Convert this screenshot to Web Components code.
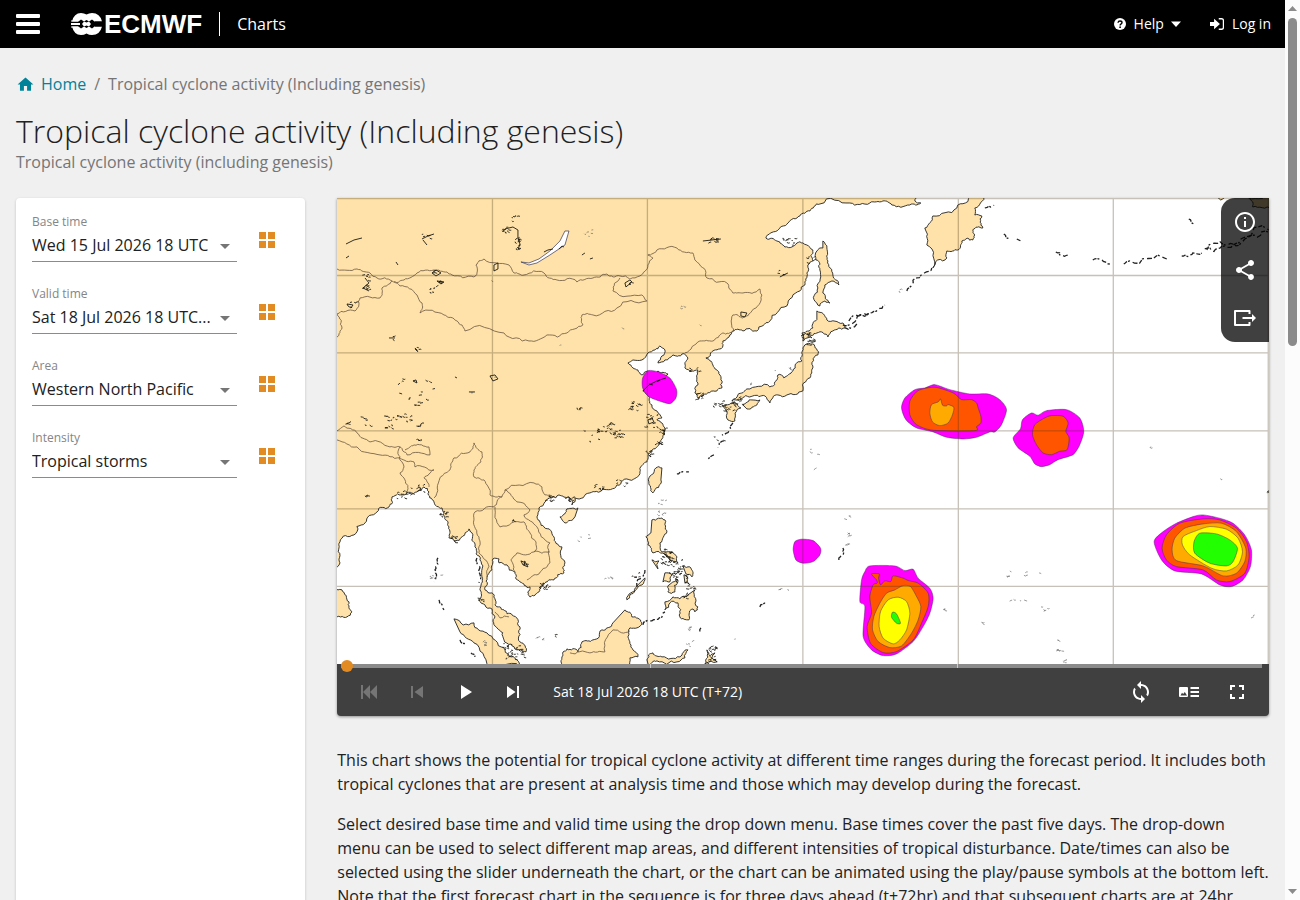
<!DOCTYPE html>
<html lang="en">
<head>
<meta charset="utf-8">
<title>Tropical cyclone activity (Including genesis) | ECMWF Charts</title>
<style>
    body {
        margin: 0;
        background-color: #f0f0f0;
        font-family: "Open Sans", "Noto Sans", sans-serif;
        font-size: 16px;
        line-height: 24px;
        color: #212121;
    }
</style>
</head>
<body>
<charts-app>
    <site-header slot="header" section="Charts"></site-header>
    <page-heading slot="heading" heading="Tropical cyclone activity (Including genesis)" subtitle="Tropical cyclone activity (including genesis)"></page-heading>
    <filter-panel slot="side">
        <filter-field label="Base time" value="Wed 15 Jul 2026 18 UTC"></filter-field>
        <filter-field label="Valid time" value="Sat 18 Jul 2026 18 UTC..."></filter-field>
        <filter-field label="Area" value="Western North Pacific"></filter-field>
        <filter-field label="Intensity" value="Tropical storms"></filter-field>
    </filter-panel>
    <chart-player caption="Sat 18 Jul 2026 18 UTC (T+72)">
        <cyclone-map></cyclone-map>
    </chart-player>
    <chart-text>
        <p>This chart shows the potential for tropical cyclone activity at different time ranges during the forecast period. It includes both tropical cyclones that are present at analysis time and those which may develop during the forecast.</p>
        <p>Select desired base time and valid time using the drop down menu. Base times cover the past five days. The drop-down menu can be used to select different map areas, and different intensities of tropical disturbance. Date/times can also be selected using the slider underneath the chart, or the chart can be animated using the play/pause symbols at the bottom left. Note that the first forecast chart in the sequence is for three days ahead (t+72hr) and that subsequent charts are at 24hr intervals.</p>
    </chart-text>
</charts-app>

<script>
const ICONS = {
    menu: '<path d="M1 2h22a1 1 0 0 1 1 1v2a1 1 0 0 1-1 1H1a1 1 0 0 1-1-1V3a1 1 0 0 1 1-1zM1 10h22a1 1 0 0 1 1 1v2a1 1 0 0 1-1 1H1a1 1 0 0 1-1-1v-2a1 1 0 0 1 1-1zM1 18h22a1 1 0 0 1 1 1v2a1 1 0 0 1-1 1H1a1 1 0 0 1-1-1v-2a1 1 0 0 1 1-1z"/>',
    home: '<path d="M10 20v-6h4v6h5v-8h3L12 3 2 12h3v8z"/>',
    help: '<circle cx="12" cy="12" r="12"/><path d="M8 9.500q.5-3.500 4-3.500 4 0 4 3.200 0 2-2.200 3.200-1.500.8-1.500 2.600" fill="none" stroke="#000" stroke-width="2.800"/><circle cx="12.200" cy="18.300" r="1.800" fill="#000"/>',
    login: '<path d="M0 8.500h7V3l10 9-10 9v-5.500H0z"/><path d="M15 3h5q3 0 3 3v12q0 3-3 3h-5" fill="none" stroke="currentColor" stroke-width="2.200"/>',
    caret: '<path d="M2 7h20L12 18z"/>',
    drop: '<path d="M7 10l5 5 5-5z"/>',
    grid: '<path d="M4 4h7v7H4zM13 4h7v7h-7zM4 13h7v7H4zM13 13h7v7h-7z"/>',
    info: '<path d="M11 7h2v2h-2zm0 4h2v6h-2zm1-9C6.480 2 2 6.480 2 12s4.480 10 10 10 10-4.480 10-10S17.520 2 12 2zm0 18c-4.410 0-8-3.590-8-8s3.590-8 8-8 8 3.590 8 8-3.590 8-8 8z"/>',
    share: '<path d="M18 16.080c-.76 0-1.440.3-1.960.77L8.910 12.700c.05-.23.09-.46.09-.7s-.04-.47-.09-.7l7.050-4.110c.54.5 1.250.81 2.040.81 1.660 0 3-1.340 3-3s-1.340-3-3-3-3 1.340-3 3c0 .24.04.47.09.7L8.040 9.810C7.500 9.310 6.790 9 6 9c-1.660 0-3 1.340-3 3s1.340 3 3 3c.79 0 1.500-.31 2.040-.81l7.120 4.160c-.05.21-.08.43-.08.65 0 1.610 1.310 2.920 2.920 2.920s2.920-1.310 2.920-2.920-1.310-2.920-2.920-2.920z"/>',
    leave: '<path d="M16.500 8V5H2v14h14.500v-3" fill="none" stroke="currentColor" stroke-width="2" stroke-linejoin="round"/><path d="M9.500 11H19V8l4 4-4 4v-3H9.500z"/>',
    first: '<path d="M4 5h2v14H4zM13 5v14l-7-7zM20 5v14l-7-7z"/>',
    prev: '<path d="M6 6h2v12H6zm3.500 6l8.500 6V6z"/>',
    play: '<path d="M8 5v14l11-7z"/>',
    next: '<path d="M6 18l8.500-6L6 6v12zM16 6v12h2V6h-2z"/>',
    loop: '<path d="M12 5V2L8 6l4 4V7c3.310 0 6 2.690 6 6 0 1.010-.25 1.970-.7 2.800l1.460 1.460C19.540 16.030 20 14.570 20 13c0-4.420-3.580-8-8-8zm0 14c-3.310 0-6-2.690-6-6 0-1.010.25-1.970.7-2.800L5.240 8.740C4.460 9.970 4 11.430 4 13c0 4.420 3.580 8 8 8v3l4-4-4-4v3z" transform="translate(0 -1)"/>',
    legend: '<path fill-rule="evenodd" d="M3 7h7q1 0 1 1v8q0 1-1 1H3q-1 0-1-1V8q0-1 1-1zM3.500 15.500h6.500l-2.200-3.500-1.600 2-1.200-1.200zM13.500 7H22v2h-8.500zM13.500 11H22v2h-8.500zM13.500 15H22v2h-8.500z"/>',
    full: '<path d="M7 14H5v5h5v-2H7v-3zm-2-4h2V7h3V5H5v5zm12 7h-3v2h5v-5h-2v3zM14 5v2h3v3h2V5h-5z"/>'
};

class UiIcon extends HTMLElement {
    connectedCallback() {
        const size = this.getAttribute('size') || 24;
        this.attachShadow({ mode: 'open' }).innerHTML = `
            <style>
                :host { display: block; flex: none; width: ${size}px; height: ${size}px; }
                svg { display: block; }
            </style>
            <svg width="${size}" height="${size}" viewBox="0 0 24 24" fill="currentColor" aria-hidden="true">${ICONS[this.getAttribute('name')]}</svg>
        `;
    }
}

class ChartsApp extends HTMLElement {
    constructor() {
        super();
        this.attachShadow({ mode: 'open' }).innerHTML = `
            <style>
                :host {
                    display: grid;
                    grid-template-columns: minmax(0, 1fr) 15px;
                    height: 100vh;
                    overflow: hidden;
                }
                .page { display: flex; flex-direction: column; min-width: 0; overflow: hidden; }
                .columns { display: flex; flex: 1 0 auto; }
                .side, .main { box-sizing: border-box; padding: 0 16px; }
                .side { display: flex; width: 25%; }
                .main { width: 75%; }
            </style>
            <div class="page">
                <slot name="header"></slot>
                <slot name="heading"></slot>
                <div class="columns">
                    <div class="side"><slot name="side"></slot></div>
                    <main class="main"><slot></slot></main>
                </div>
            </div>
            <scroll-rail></scroll-rail>
        `;
    }
}

class ScrollRail extends HTMLElement {
    constructor() {
        super();
        this.attachShadow({ mode: 'open' }).innerHTML = `
            <style>
                :host {
                    display: flex;
                    flex-direction: column;
                    align-items: center;
                    box-sizing: border-box;
                    height: 100vh;
                    padding: 6px 0;
                    background-color: #fcfcfc;
                    color: #8b8b8b;
                }
                svg { display: block; flex: none; fill: currentColor; }
                .track { flex: 1; width: 9px; padding: 7px 0; }
                .thumb { height: 38%; border-radius: 5px; background-color: currentColor; }
            </style>
            <svg width="9" height="5"><path d="M0 5h9L4.500 0z"/></svg>
            <div class="track"><div class="thumb"></div></div>
            <svg width="9" height="5"><path d="M0 0h9L4.500 5z"/></svg>
        `;
    }
}

class SiteHeader extends HTMLElement {
    connectedCallback() {
        this.attachShadow({ mode: 'open' }).innerHTML = `
            <style>
                :host {
                    display: flex;
                    flex: none;
                    align-items: center;
                    box-sizing: border-box;
                    height: 48px;
                    padding: 0 14px 0 16px;
                    background-color: #000;
                    color: #fff;
                }
                button, a {
                    display: flex;
                    align-items: center;
                    padding: 0;
                    border: 0;
                    background: none;
                    color: inherit;
                    font: inherit;
                    text-decoration: none;
                    cursor: pointer;
                }
                .logo { gap: 1px; margin-left: 31px; }
                .logo span { font: bold 26px/26px "Liberation Sans", Arial, sans-serif; }
                .section { margin-left: 17px; padding-left: 17px; border-left: 1px solid #fff; }
                nav { display: flex; gap: 28px; margin-left: auto; font-size: 14px; }
                .help ui-icon:last-child { margin-left: 6px; }
                .help ui-icon:first-child, .login ui-icon { margin-right: 8px; }
            </style>
            <button aria-label="Menu"><ui-icon name="menu"></ui-icon></button>
            <a class="logo" href="#">
                <svg width="32" height="24" viewBox="0 0 32 24" aria-hidden="true">
                    <path fill="#fff" d="M10 1q3 0 5.500 1.500Q18 1 21 1q8 0 10 8.500h-7.500l-2.500-2-3 2-2.500-1.500-2.500 1.500-3-2-2.500 2H1Q3 1 10 1zM10 23q3 0 5.500-1.500Q18 23 21 23q8 0 10-8.500h-7.500l-2.500 2-3-2-2.500 1.500-2.500-1.500-3 2-2.500-2H1Q3 23 10 23z"/>
                    <path fill="#fff" d="M0 11h9v2H0zM0 8.500h7v1H0zM0 14.500h7v1H0zM13 9.500l2.500 1 2.500-1 2 2.500-2 2.500-2.500-1-2.500 1-2-2.500z"/>
                    <path fill="#000" d="M24 9.500h8v5h-8z"/>
                </svg>
                <span>ECMWF</span>
            </a>
            <div class="section">${this.getAttribute('section')}</div>
            <nav>
                <button class="help"><ui-icon name="help" size="12"></ui-icon>Help<ui-icon name="caret" size="12"></ui-icon></button>
                <a class="login" href="#"><ui-icon name="login" size="14"></ui-icon>Log in</a>
            </nav>
        `;
    }
}

class PageHeading extends HTMLElement {
    connectedCallback() {
        const heading = this.getAttribute('heading');
        this.attachShadow({ mode: 'open' }).innerHTML = `
            <style>
                :host { display: block; flex: none; padding: 24px 16px; color: #757575; }
                nav, nav a { display: flex; align-items: center; }
                nav { gap: 8px; }
                nav a { gap: 6px; color: #008299; text-decoration: none; }
                h1 { margin: 16px 0 0; font-size: 32px; font-weight: 300; line-height: 38px; color: #212121; }
                p { margin: 0; }
            </style>
            <nav aria-label="Breadcrumb">
                <a href="#"><ui-icon name="home" size="19"></ui-icon>Home</a>
                <span>/</span>
                <span>${heading}</span>
            </nav>
            <h1>${heading}</h1>
            <p>${this.getAttribute('subtitle')}</p>
        `;
    }
}

class FilterPanel extends HTMLElement {
    constructor() {
        super();
        this.attachShadow({ mode: 'open' }).innerHTML = `
            <style>
                :host {
                    display: flex;
                    flex: 1;
                    flex-direction: column;
                    gap: 24px;
                    min-width: 0;
                    padding: 16px;
                    border-radius: 4px;
                    background-color: #fff;
                    box-shadow: 0 1px 3px rgba(0, 0, 0, .2);
                }
            </style>
            <slot></slot>
        `;
    }
}

class FilterField extends HTMLElement {
    connectedCallback() {
        const label = this.getAttribute('label');
        this.attachShadow({ mode: 'open' }).innerHTML = `
            <style>
                :host { display: flex; align-items: center; }
                .field { position: relative; flex: 1; min-width: 0; }
                label { display: block; font-size: 12px; line-height: 16px; color: #858585; }
                select {
                    display: block;
                    box-sizing: border-box;
                    width: 100%;
                    height: 32px;
                    padding: 0 24px 2px 0;
                    border: 0;
                    border-bottom: 1px solid #8b8b8b;
                    border-radius: 0;
                    appearance: none;
                    background: none;
                    color: #212121;
                    font: inherit;
                }
                .arrow { position: absolute; right: 0; bottom: 4px; color: #757575; pointer-events: none; }
                button {
                    display: flex;
                    align-items: center;
                    justify-content: center;
                    width: 52px;
                    height: 48px;
                    padding: 4px 0 0 8px;
                    border: 0;
                    background: none;
                    color: #e28b22;
                    cursor: pointer;
                }
            </style>
            <div class="field">
                <label for="choice">${label}</label>
                <select id="choice"><option>${this.getAttribute('value')}</option></select>
                <ui-icon class="arrow" name="drop"></ui-icon>
            </div>
            <button aria-label="${label}: show all"><ui-icon name="grid"></ui-icon></button>
        `;
    }
}

class ChartPlayer extends HTMLElement {
    connectedCallback() {
        this.attachShadow({ mode: 'open' }).innerHTML = `
            <style>
                :host {
                    display: block;
                    position: relative;
                    border-radius: 0 0 4px 4px;
                    background-color: #404040;
                    box-shadow: 0 1px 3px rgba(0, 0, 0, .4);
                }
                button {
                    display: flex;
                    align-items: center;
                    justify-content: center;
                    width: 48px;
                    height: 48px;
                    padding: 0;
                    border: 0;
                    background: none;
                    color: #fff;
                    cursor: pointer;
                }
                button:disabled { color: #757575; }
                .tools {
                    position: absolute;
                    top: 0;
                    right: 0;
                    border-radius: 14px 0 0 14px;
                    background-color: rgba(0, 0, 0, .75);
                }
                .bar { position: relative; display: flex; align-items: center; padding: 4px 8px 0; }
                .bar span { flex: 1; padding-left: 16px; font-size: 14px; color: #fff; }
                input {
                    position: absolute;
                    top: -4px;
                    left: 4px;
                    width: calc(100% - 11px);
                    height: 12px;
                    margin: 0;
                    appearance: none;
                    background: none;
                }
                input::-webkit-slider-runnable-track {
                    height: 4px;
                    background: linear-gradient(90deg, #8b8b8b 309px, #ccc 309px 310px, #8b8b8b 310px 616px, #ccc 616px 617px, #8b8b8b 617px);
                }
                input::-webkit-slider-thumb {
                    width: 12px;
                    height: 12px;
                    margin-top: -4px;
                    border-radius: 50%;
                    appearance: none;
                    background-color: #e28b22;
                }
            </style>
            <slot></slot>
            <div class="tools">
                <button aria-label="Information"><ui-icon name="info"></ui-icon></button>
                <button aria-label="Share"><ui-icon name="share"></ui-icon></button>
                <button aria-label="Export"><ui-icon name="leave"></ui-icon></button>
            </div>
            <div class="bar">
                <input type="range" min="0" max="3" value="0" aria-label="Forecast step">
                <button disabled aria-label="First"><ui-icon name="first"></ui-icon></button>
                <button disabled aria-label="Previous"><ui-icon name="prev"></ui-icon></button>
                <button aria-label="Play"><ui-icon name="play"></ui-icon></button>
                <button aria-label="Next"><ui-icon name="next"></ui-icon></button>
                <span>${this.getAttribute('caption')}</span>
                <button aria-label="Loop"><ui-icon name="loop"></ui-icon></button>
                <button aria-label="Legend"><ui-icon name="legend"></ui-icon></button>
                <button aria-label="Full screen"><ui-icon name="full"></ui-icon></button>
            </div>
        `;
    }
}

class ChartText extends HTMLElement {
    constructor() {
        super();
        this.attachShadow({ mode: 'open' }).innerHTML = `
            <style>
                :host { display: block; padding-top: 16px; }
                ::slotted(p) { margin: 16px 0; }
            </style>
            <slot></slot>
        `;
    }
}

// Map outlines, as x,y pairs on a 932 x 466 chart.
const LAND = [
    // Asia
    '-3,-3 578,-3 578,3 584,5 573,7 555,7 546,3 533,5 513,5 483,6 473,13 463,18 451,25 440,33 429,40 440,43 448,49 455,49 460,45 466,45 470,47 476,52 476,63 471,67 470,75 468,87 463,93 450,108 433,123 420,133 406,133 396,133 393,137 386,143 386,148 376,153 369,160 376,167 383,177 385,190 380,193 366,197 361,200 358,195 361,187 360,180 361,172 355,173 348,170 351,160 345,156 336,157 328,162 321,165 325,158 328,152 323,148 318,152 311,155 305,162 296,162 291,165 296,170 301,172 305,177 311,173 321,173 331,176 328,180 318,182 311,187 306,193 311,197 315,207 320,213 325,220 320,222 325,225 328,230 326,238 323,244 315,254 310,264 303,274 293,282 280,287 266,291 253,295 238,300 235,307 232,299 222,297 208,304 202,310 200,319 207,329 217,339 225,349 228,365 227,375 217,382 208,385 202,394 193,399 193,389 183,384 178,374 170,367 162,365 162,361 156,361 155,372 150,380 148,392 155,395 158,407 167,412 175,417 183,429 183,444 189,454 180,452 167,442 160,430 158,419 148,407 142,402 143,392 145,379 143,362 138,349 135,335 132,331 125,339 118,343 112,340 112,329 108,319 105,310 97,304 92,294 87,289 80,294 67,297 55,299 52,309 40,314 28,325 17,337 3,344 2,350 3,365 -3,371',
    // Kamchatka
    '635,-3 620,10 596,18 588,30 590,47 596,70 610,60 610,53 621,52 625,43 636,42 636,32 646,30 645,18 638,17 638,10 648,-3',
    // Sakhalin, Hokkaido
    '486,43 490,50 491,63 496,77 502,87 495,83 488,87 486,95 493,105 488,103 483,108 480,105 481,90 483,72 479,62 480,53 486,50',
    '480,113 490,122 506,125 508,130 496,133 491,139 480,135 470,136 475,140 466,143 465,135 476,130 480,120',
    // Honshu, Shikoku, Kyushu
    '468,147 476,146 481,157 476,170 473,180 466,193 450,197 441,197 433,205 428,198 416,198 403,202 395,203 401,197 410,191 433,189 440,182 441,177 447,180 456,173 465,163 466,150',
    '406,207 415,202 423,202 420,207 410,211',
    '385,207 396,204 404,210 398,223 391,222 390,213',
    // Taiwan, Hainan
    '325,270 319,270 312,284 316,295 324,282',
    '241,310 230,311 223,319 228,325 238,319',
    // Philippines
    '315,322 328,322 330,334 323,345 325,354 340,359 341,365 330,359 316,355 311,347 309,339 314,335',
    '315,362 322,363 321,371',
    '328,375 335,377 333,384 326,384',
    '336,384 341,382 338,394 331,394 331,388',
    '346,368 353,369 355,379 349,376',
    '347,377 351,380 352,386 348,385',
    '358,392 361,409 358,414 355,411 352,422 343,419 341,405 333,405 328,412 328,404 336,399 343,401 351,397',
    '308,380 305,387 298,393 290,402 291,398 301,387',
    // Borneo, Sulawesi, Halmahera
    '288,412 295,419 305,425 293,430 291,439 296,452 301,459 293,460 292,469 226,469 225,459 230,451 241,454 245,444 256,442 265,432 276,425',
    '310,462 316,455 325,459 343,459 351,452 348,460 340,464 320,463 312,469',
    '368,466 370,452 373,458 378,455 375,460 380,464 374,463',
    // Sumatra, Sri Lanka
    '117,421 137,425 150,435 167,450 180,462 183,469 148,469 137,445 123,434',
    '-3,390 5,392 12,404 15,414 10,419 -3,420',
    // Alaska
    '909,-3 935,-3 935,10 916,9 916,4',
    '878,-3 888,-3 884,2'
];

const BORDERS = [
    '0,71 20,71 33,75 40,80 55,83 67,82 80,75 97,72 110,74 115,77 137,79 140,75 139,67 147,61 172,67 177,75 187,77 207,75 220,82 240,84 256,80 270,76 283,78 303,78 311,67 316,60 311,57 320,52 340,50 356,55 363,67 370,80 390,85 396,95 406,95 423,91 425,97 415,113 406,120 396,117 397,133 386,135 376,143 363,143 348,155',
    '57,84 63,88 80,97 85,105 83,115 107,117 120,123 128,133 167,135 192,143 210,137 230,135 246,127 245,117 256,117 280,110 310,103 305,97 276,93 283,80',
    '55,83 45,90 43,100 23,100 18,113 0,116 5,130 0,139',
    '0,233 7,228 20,235 33,244 53,249 63,249 70,257 93,257 92,249 77,247 68,252',
    '0,242 20,249 43,257 63,260 77,264 78,269 97,272 87,280 92,289',
    '63,249 63,262 67,269 63,275 68,282 70,294',
    '97,300 103,280 113,272 117,260 133,254 137,245 145,254 144,264 137,272 137,279 147,282 153,297 165,299 168,292 197,285 205,289 208,297 218,299',
    '165,299 157,309 138,314 137,322 142,339 142,355 152,369 150,379',
    '158,309 163,329 187,324 193,335 199,344 197,354 180,355 174,362 178,374',
    '168,292 180,304 193,312 187,317 200,329 213,345 213,365 200,377 190,382',
    '197,354 213,354', '158,414 163,420 172,419',
    '233,455 253,455 268,454 276,432 293,433'
];

// Islands strung along a line: dark broken strokes
const CHAINS = [
    '506,127 520,120 533,115 548,107', '570,93 580,80 595,70', '508,130 520,126',
    '719,54 731,57', '756,62 773,66', '787,66 793,63 830,61', '845,58 856,55 865,55', '868,51 885,48 906,40 932,32',
    '870,52 888,47 908,41 932,34', '667,36 673,40', '680,41 684,43', '852,21 857,26', '648,10 657,7', '512,123 532,114',
    '101,360 98,372 97,384', '102,402 107,412', '140,360 143,370 142,385',
    '387,243 381,250', '377,257 370,262', '340,276 352,274', '308,372 300,390',
    '506,350 502,362', '306,427 315,423 328,414', '364,430 363,434',
    '423,409 428,403', '396,225 385,237', '123,442 129,447', '134,455 138,459'
];

// Scattered lakes: x, y, how many, spread
const SPECKS = [
    [178, 20, 5, 4], [169, 32, 8, 4], [180, 42, 7, 3], [182, 50, 5, 3], [89, 39, 5, 4],
    [28, 80, 5, 4], [29, 90, 7, 4], [14, 106, 4, 5], [98, 75, 3, 3], [96, 92, 6, 4], [103, 84, 3, 3],
    [376, 44, 9, 5], [292, 86, 3, 3], [443, 76, 4, 4], [452, 43, 10, 6],
    [473, 62, 5, 4], [78, 189, 12, 18], [80, 207, 5, 4], [53, 224, 14, 10], [67, 219, 9, 7], [28, 223, 6, 6], [82, 227, 5, 4],
    [10, 227, 4, 3], [297, 208, 14, 7], [268, 230, 18, 8], [281, 236, 14, 6], [243, 211, 4, 3], [254, 238, 6, 8],
    [313, 223, 14, 9], [326, 233, 10, 4], [391, 208, 14, 7], [400, 205, 8, 7], [363, 199, 10, 5], [357, 173, 6, 5],
    [382, 241, 3, 5], [380, 208, 6, 4], [473, 144, 9, 5], [468, 137, 9, 4], [82, 241, 4, 3], [28, 298, 3, 2],
    [80, 291, 10, 7], [67, 296, 10, 8], [106, 316, 9, 5], [115, 342, 8, 5], [176, 323, 3, 2], [187, 366, 5, 2],
    [211, 301, 8, 4], [232, 301, 10, 4], [207, 388, 12, 5], [143, 402, 6, 3], [178, 455, 24, 10], [170, 449, 9, 5],
    [329, 360, 16, 7], [336, 370, 22, 10], [342, 378, 20, 8], [330, 354, 9, 4], [353, 388, 8, 5], [345, 398, 6, 5],
    [218, 437, 3, 2], [375, 450, 10, 5], [374, 461, 10, 5], [299, 378, 5, 5],
    [261, 290, 7, 5], [285, 285, 6, 6], [312, 256, 8, 4], [322, 246, 7, 4],
    [931, 295, 2, 1], [55, 140, 2, 2], [80, 151, 4, 2]
];

// Atolls and small islets, drawn fainter
const ISLETS = [
    [99, 380, 6, 6], [146, 446, 5, 3], [202, 441, 4, 4], [326, 305, 4, 5], [324, 315, 6, 4], [509, 320, 3, 4], [510, 335, 4, 6],
    [510, 348, 3, 3], [607, 412, 3, 1], [645, 425, 2, 1], [708, 411, 4, 4], [695, 380, 4, 10], [680, 400, 4, 9],
    [442, 392, 2, 1], [673, 377, 4, 6], [451, 392, 1, 1], [884, 281, 1, 1], [916, 419, 2, 2], [808, 249, 2, 6],
    [476, 254, 3, 5], [270, 383, 4, 7], [246, 340, 4, 6], [353, 430, 4, 3], [353, 446, 4, 4], [721, 442, 2, 1],
    [722, 454, 5, 3], [727, 464, 4, 2], [247, 37, 5, 8], [345, 110, 3, 3], [157, 180, 1, 1], [135, 194, 2, 2],
    [155, 83, 1, 1], [223, 147, 1, 1], [285, 129, 1, 1], [363, 127, 1, 1], [438, 173, 1, 1], [413, 185, 2, 2],
    [453, 170, 4, 1], [563, 93, 2, 2], [397, 441, 1, 1], [477, 272, 1, 1]
];

const RINGS = [
    '95,75 99,72 104,75 99,78', '157,67 161,65 161,71 157,73', '153,178 158,177 161,181 156,183',
    '10,106 16,107 14,110 11,108', '404,114 410,115 408,119 404,118', '184,363 189,365 191,369 186,367',
    '288,85 293,82 295,84 289,89', '311,222 315,220 317,224 312,226', '76,183 79,182 80,185', '100,83 107,84 104,86'
];

// Strike probability areas; points are thirds of a map pixel from the origin
const STORMS = [
    { origin: [233, 0], bands: [
        ['#ff00ff', '235,518 265,522 300,540 320,575 318,600 300,617 265,608 235,595 218,570 218,540']] },
    { origin: [463, 0], bands: [
        ['#ff00ff', '405,560 375,570 345,575 315,600 305,630 318,665 350,690 400,702 440,718 490,723 530,718 570,702 585,702 605,680 620,635 600,605 565,588 510,588 450,575'],
        ['#ff5500', '405,568 355,578 330,610 330,650 350,680 400,697 525,698 530,686 543,675 543,655 535,630 530,615 515,605 485,605 460,585'],
        ['#ffaa00', '422,603 428,622 440,624 445,620 462,628 458,650 445,675 420,683 398,672 390,645 395,620 415,612']] },
    { origin: [693, 0], bands: [
        ['#ff00ff', '5,645 -22,665 -28,692 -50,720 -35,750 0,775 15,798 35,806 60,800 85,785 130,770 150,740 162,700 150,660 110,635 50,638 25,652'],
        ['#ff5500', '65,653 100,655 115,675 108,700 118,720 112,755 90,760 65,770 40,765 20,740 8,710 15,680 45,660']] },
    { origin: [443, 272], bands: [
        ['#ff00ff', '65,208 100,212 122,235 120,255 100,275 70,280 48,270 40,240 45,215'],
        ['#ff00ff', '270,288 345,288 375,302 400,298 415,325 450,355 460,385 450,430 430,470 400,515 350,552 310,557 275,540 250,500 255,410 240,395 245,330 255,305'],
        ['#ff5500', '275,312 298,312 296,325 302,345 315,333 333,335 340,318 370,325 385,332 415,340 445,370 445,410 425,460 400,510 350,545 310,548 272,520 262,470 275,430 270,380 280,345 292,340 290,330'],
        ['#ffaa00', '370,347 392,350 410,380 423,410 415,450 395,490 365,528 330,533 295,515 278,480 282,440 300,400 320,370 345,360'],
        ['#ffff00', '355,382 380,395 390,430 380,480 360,510 340,522 310,505 298,470 302,425 325,390'],
        ['#22ff00', '338,427 350,432 362,460 350,460 335,442']] },
    { origin: [693, 272], bands: [
        ['#ff00ff', '520,135 570,145 610,160 645,195 665,240 662,290 640,330 605,350 570,345 515,312 435,303 395,270 373,215 400,185 440,160 490,140'],
        ['#ff5500', '520,147 570,150 620,175 650,215 658,260 645,310 600,335 560,330 520,300 440,290 410,270 397,235 410,195 450,160'],
        ['#ffaa00', '520,162 575,160 620,185 648,235 645,275 620,310 580,318 520,288 440,272 427,240 435,205 465,175'],
        ['#ffff00', '540,170 590,178 625,205 638,245 625,285 590,303 545,295 480,255 458,225 460,200 500,182'],
        ['#22ff00', '510,190 560,192 600,210 623,235 610,275 590,288 540,280 495,250 493,215']] }
];

class CycloneMap extends HTMLElement {
    constructor() {
        super();
        this.attachShadow({ mode: 'open' });
        this.seed = 7;
    }

    connectedCallback() {
        this.shadowRoot.innerHTML = `
            <style>
                :host { display: block; }
                svg { display: block; width: 100%; background-color: #fff; }
                .land { fill: #fee2a9; stroke: #222; stroke-width: .9; }
                .border { fill: none; stroke: #6b5540; stroke-width: .8; }
                .chain { fill: none; stroke: #222; stroke-width: 1.300; stroke-dasharray: 4 1 2 3 5 2; }
                .speck { fill: none; stroke: #1c1a12; stroke-width: .9; }
                .islet { fill: none; stroke: #555; stroke-width: .6; }
                .lake { fill: #fff; stroke: #335; stroke-width: .7; }
                .storm { stroke: rgba(60, 40, 90, .65); stroke-width: .7; stroke-linejoin: round; }
                .grid { fill: none; stroke: rgba(70, 50, 20, .3); stroke-width: 1.300; }
            </style>
            <svg viewBox="0 0 932 466" role="img" aria-label="Tropical cyclone activity map">
                ${LAND.map(line => `<path class="land" d="${this.coast(line, 0.22)}Z"/>`).join('')}
                ${BORDERS.map(line => `<path class="border" d="${this.coast(line, 0.16)}"/>`).join('')}
                <path class="lake" d="M184 64l8 1 10-4 11-8 10-10 5-10h4l-4 14-15 10-13 8-8 2z"/>
                <path class="speck" d="M207 54l4-2 5-1M222 51l3-3 2 1M9 46l8-4 8-2M9 60l3-2M85 41l6-3 6-2M86 42l4 5M168 31l8-2 5 3 0 8 2 6-2 6M28 80l4 5-6 5 6 3M78 150l3 4M366 43l18-2M443 79l8-4M59 64l2 3M118 179l2 1M52 140h6M132 194h6M245 57l3-2M253 61l3-1"/>
                ${RINGS.map(line => `<path class="speck" d="M${line}Z"/>`).join('')}
                ${CHAINS.map(line => `<path class="chain" d="${this.coast(line, 0.25)}"/>`).join('')}
                <path class="speck" d="${SPECKS.map(cluster => this.specks(cluster)).join('')}"/>
                <path class="islet" d="${ISLETS.map(cluster => this.specks(cluster)).join('')}"/>
                ${STORMS.map(storm => this.storm(storm)).join('')}
                <path class="speck" d="M306 193l6-6 8-4 9-3M312 186l4 1M320 184l3-2"/>
                <path class="grid" d="M155.500 0v466M310.500 0v466M466 0v466M621.500 0v466M776.500 0v466M931.500 0v466M0 .5h932M0 77.500h932M0 155h932M0 233h932M0 311h932M0 388.500h932"/>
            </svg>
        `;
    }

    // repeatable noise in -0.5..0.5, so the coast is the same on every load
    noise() {
        this.seed = (this.seed * 16807) % 2147483647;
        return this.seed / 2147483647 - 0.5;
    }

    // roughen a polyline by moving the middle of each long segment
    coast(line, rough) {
        let points = line.split(' ').map(pair => pair.split(',').map(Number));
        for (let pass = 0; pass < 3; pass++) {
            const next = [points[0]];
            for (let i = 1; i < points.length; i++) {
                const [ax, ay] = points[i - 1];
                const [bx, by] = points[i];
                const length = Math.hypot(bx - ax, by - ay);
                if (length > 2.5 && length < 60) {
                    const shift = this.noise() * length * rough * 2;
                    next.push([(ax + bx) / 2 - (by - ay) / length * shift, (ay + by) / 2 + (bx - ax) / length * shift]);
                }
                next.push(points[i]);
            }
            points = next;
        }
        return 'M' + points.map(p => p.map(n => n.toFixed(1)).join(' ')).join('L');
    }

    specks([x, y, count, spread]) {
        let d = '';
        for (let i = 0; i < count; i++) {
            const px = x + this.noise() * spread * 2;
            const py = y + this.noise() * spread * 1.4;
            d += `M${px.toFixed(1)} ${py.toFixed(1)}l${(1 + this.noise() * 2).toFixed(1)} ${(this.noise() * 3).toFixed(1)}l1 ${this.noise().toFixed(1)}`;
        }
        return d;
    }

    // closed smooth curve through every point of a band
    storm({ origin, bands }) {
        return bands.map(([color, line]) => {
            const p = line.split(' ').map(pair => pair.split(',').map((n, i) => Number(n) / 3 + origin[i]));
            const at = i => p[(i + p.length) % p.length];
            let d = `M${p[0].join(' ')}`;
            for (let i = 0; i < p.length; i++) {
                const [before, from, to, after] = [at(i - 1), at(i), at(i + 1), at(i + 2)];
                const c1 = from.map((n, k) => n + (to[k] - before[k]) / 8);
                const c2 = to.map((n, k) => n - (after[k] - from[k]) / 8);
                d += 'C' + [...c1, ...c2, ...to].map(n => n.toFixed(1)).join(' ');
            }
            return `<path class="storm" fill="${color}" d="${d}Z"/>`;
        }).join('');
    }
}

customElements.define('ui-icon', UiIcon);
customElements.define('scroll-rail', ScrollRail);
customElements.define('charts-app', ChartsApp);
customElements.define('site-header', SiteHeader);
customElements.define('page-heading', PageHeading);
customElements.define('filter-panel', FilterPanel);
customElements.define('filter-field', FilterField);
customElements.define('cyclone-map', CycloneMap);
customElements.define('chart-player', ChartPlayer);
customElements.define('chart-text', ChartText);
</script>
</body>
</html>
